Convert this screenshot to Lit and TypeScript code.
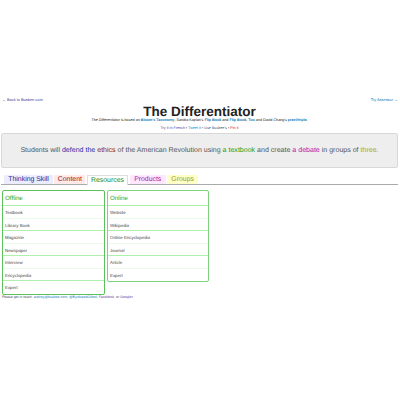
import { LitElement, html, css } from "lit";
import { customElement } from "lit/decorators.js";

const offline = ["Textbook", "Library Book", "Magazine", "Newspaper", "Interview", "Encyclopedia", "Expert"];
const online = ["Website", "Wikipedia", "Online Encyclopedia", "Journal", "Article", "Expert"];

@customElement("app-root")
export class AppRoot extends LitElement {
  static styles = css`
    :host { display: block; font-family: "Liberation Sans", Arial, sans-serif; color: #333; background: #fff; height: 400px; overflow: hidden; text-rendering: geometricPrecision; }
    a { text-decoration: none; }
    .page { padding: 97px 2px 0 1px; }
    .nav { display: flex; justify-content: space-between; font-size: 3.9px; line-height: 5px; padding: 0 0 0 1px; }
    .nav a.l { color: #3a3a9c; }
    .nav a.r { color: #0a7ab8; }
    h1 { margin: 2px 0 0; font-size: 13.5px; line-height: 16px; text-align: center; color: #222; font-weight: bold; }
    .sub { text-align: center; font-size: 3.7px; line-height: 5px; color: #222; margin-top: -2px; }
    .sub a { color: #0a7ab8; font-weight: bold; }
    .share { text-align: center; font-size: 3.7px; line-height: 5px; color: #444; margin-top: 3px; }
    .share .p { color: #5a3aa0; } .share .b { color: #0a8ac8; } .share .n { color: #33557a; } .share .red { color: #d01818; }
    .goal { margin-top: 2px; height: 35px; box-sizing: border-box; border: 1px solid #d8d8d8; border-radius: 2px; background: #eee; display: flex; align-items: center; justify-content: center; font-size: 7.05px; color: #555; white-space: nowrap; }
    .goal .v { color: #2c2ca8; } .goal .c { color: #8c1c1c; } .goal .g { color: #22a022; } .goal .m { color: #b020b0; } .goal .y { color: #a8a820; }
    .tabs { display: flex; gap: 1.5px; margin-top: 7px; padding-left: 3.3px; border-bottom: 1px solid #aaa; height: 9px; font-size: 6.9px; }
    .tab { padding: 0 4px; line-height: 9px; height: 9px; border-radius: 1px 1px 0 0; white-space: nowrap; }
    .t1 { background: #ececff; color: #22228c; }
    .t2 { background: #ffe8e8; color: #8c2424; padding: 0 3.4px; }
    .t3 { background: #fff; color: #168c16; height: 10px; border: 1px solid #ddd; border-bottom: 0; box-sizing: border-box; line-height: 9px; padding: 0 3.2px; position: relative; z-index: 1; }
    .t4 { background: #ffe8ff; color: #a020a0; padding: 0 4.5px; }
    .t5 { background: #ffffc8; color: #9c9c1c; }
    .cols { display: flex; align-items: flex-start; gap: 2px; margin-top: 5px; padding-left: 1px; }
    .card { width: 103px; box-sizing: border-box; border: 1px solid #5cc05c; border-radius: 2px; background: #fff; }
    .card.on { border-color: #7fd07f; width: 102px; }
    .head { font-size: 6.2px; line-height: 16px; height: 15px; padding-left: 2px; color: #22aa22; border-bottom: 1px solid #aff0af; box-sizing: border-box; }
    .row { font-size: 4.4px; line-height: 13.4px; height: 12.5px; padding-left: 2px; color: #444; box-sizing: border-box; }
    .row.a { border-bottom: 1px solid #eafbea; }
    .row.b { border-bottom: 1px solid #aff0af; }
    .row:last-child { border-bottom: 0; }
    .foot { font-size: 3.5px; line-height: 5px; color: #444; padding-left: 1px; }
    .foot a { color: #0a7ab8; } .foot .fb { color: #5a3aa0; }
  `;

  list(title: string, items: string[], cls: string) {
    return html`<div class="card ${cls}">
      <div class="head">${title}</div>
      ${items.map((t, i) => html`<div class="row ${i % 2 ? "b" : "a"}">${t}</div>`)}
    </div>`;
  }

  render() {
    return html`<div class="page">
      <div class="nav"><a class="l">← Back to Busbee.com</a><a class="r">Try Assessor →</a></div>
      <h1>The Differentiator</h1>
      <div class="sub">The Differentiator is based on <a>Bloom's Taxonomy</a>, Sandra Kaplan's <a>Flip Book</a> and <a>Flip Book, Too</a> and David Chang's <a>prezi/triple</a>.</div>
      <div class="share"><span class="p">Try it in French</span> • <span class="b">Tweet it</span> • <span class="n">Use Busbee's</span> • <span class="red">Pin it</span></div>
      <div class="goal"><span>Students will <span class="v">defend the</span> <span class="c">ethics</span> of the American Revolution using <span class="g">a textbook</span> and create <span class="m">a debate</span> in groups of <span class="y">three.</span></span></div>
      <div class="tabs">
        <div class="tab t1">Thinking Skill</div>
        <div class="tab t2">Content</div>
        <div class="tab t3">Resources</div>
        <div class="tab t4">Products</div>
        <div class="tab t5">Groups</div>
      </div>
      <div class="cols">
        ${this.list("Offline", offline, "off")}
        ${this.list("Online", online, "on")}
      </div>
      <div class="foot">Please get in touch: <a>andrey@busbee.com</a>, <a>@ByrdseedGifted</a>, <a class="fb">Facebook</a>, or <a class="fb">Google+</a>.</div>
    </div>`;
  }
}
